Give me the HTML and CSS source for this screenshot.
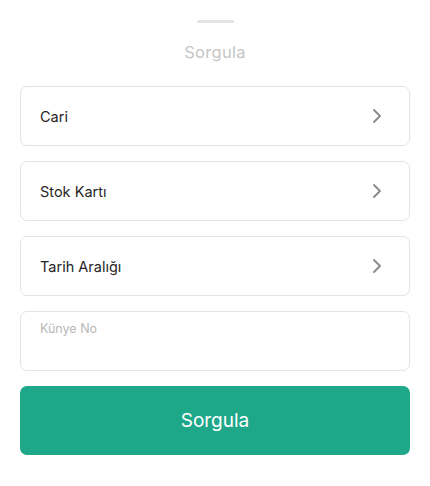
FILE: index.html
```html
<!DOCTYPE html>
<html lang="tr">
<head>
<meta charset="utf-8">
<title>Sorgula</title>
<link rel="stylesheet" href="styles.css">
</head>
<body>
<div class="sheet">
  <div class="handle"></div>
  <div class="title">Sorgula</div>
  <div class="fields">
    <div class="field select"><span class="label">Cari</span>
      <svg class="chev" width="10" height="16" viewBox="0 0 10 16"><path d="M2 2 L8 8 L2 14" fill="none" stroke="#888" stroke-width="1.8" stroke-linecap="round" stroke-linejoin="round"/></svg>
    </div>
    <div class="field select"><span class="label">Stok Kartı</span>
      <svg class="chev" width="10" height="16" viewBox="0 0 10 16"><path d="M2 2 L8 8 L2 14" fill="none" stroke="#888" stroke-width="1.8" stroke-linecap="round" stroke-linejoin="round"/></svg>
    </div>
    <div class="field select"><span class="label">Tarih Aralığı</span>
      <svg class="chev" width="10" height="16" viewBox="0 0 10 16"><path d="M2 2 L8 8 L2 14" fill="none" stroke="#888" stroke-width="1.8" stroke-linecap="round" stroke-linejoin="round"/></svg>
    </div>
    <div class="field input"><span class="placeholder">Künye No</span></div>
    <button class="submit">Sorgula</button>
  </div>
</div>
</body>
</html>
```
FILE: styles.css
```css
* { box-sizing: border-box; }
html, body { margin: 0; padding: 0; background: #fff; }
body { font-family: "Inter", "Noto Sans", sans-serif; }
.sheet { width: 430px; height: 486px; display: flex; flex-direction: column; align-items: center; padding-top: 20px; }
.handle { width: 37px; height: 3px; border-radius: 2px; background: #e3e3e3; }
.title { margin-top: 19px; font-size: 16.5px; color: #c6c6c6; line-height: 20px; letter-spacing: 0.3px; }
.fields { margin-top: 24px; width: 390px; display: flex; flex-direction: column; gap: 15px; }
.field { height: 60px; border: 1px solid #e4e4e4; border-radius: 7px; background: #fff; }
.select { display: flex; align-items: center; justify-content: space-between; padding: 0 27px 0 19px; }
.label { font-size: 14.5px; color: #262626; }
.chev { display: block; }
.input { padding: 5px 19px; }
.placeholder { font-size: 12.5px; color: #b8b8b8; line-height: 16px; }
.submit { height: 69px; border: none; border-radius: 7px; background: #1fa78a; color: #fff; font-family: inherit; font-size: 19px; cursor: pointer; }
```
